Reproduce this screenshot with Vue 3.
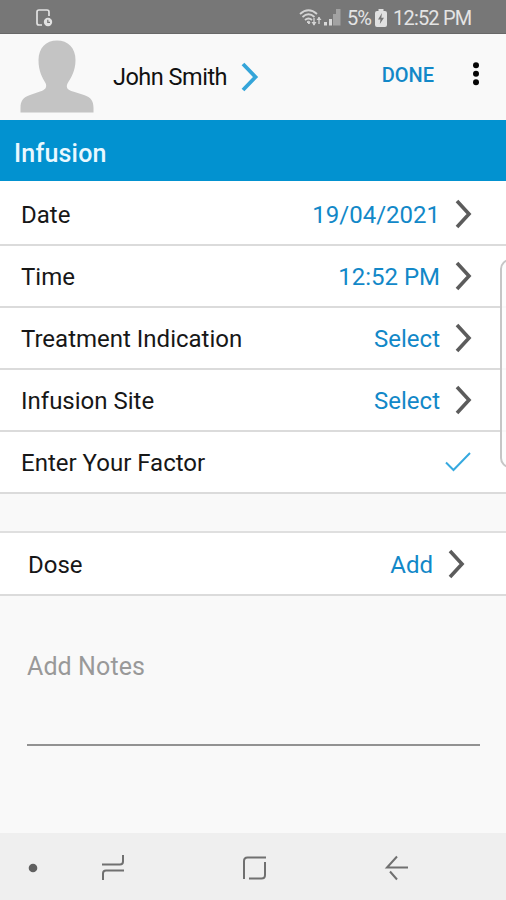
<script setup>
const rows = [
  { label: 'Date', value: '19/04/2021', cls: 'date' },
  { label: 'Time', value: '12:52 PM', cls: 'time' },
  { label: 'Treatment Indication', value: 'Select', cls: '' },
  { label: 'Infusion Site', value: 'Select', cls: '' },
  { label: 'Enter Your Factor', value: '', cls: '' }
]
</script>

<template>
  <div class="screen">
    <header class="status">
      <svg class="device" width="18" height="20" viewBox="0 0 18 20" fill="none" stroke="#e2e2e2" stroke-width="1.7">
        <path d="M14 8V4Q14 2 12 2H4Q2 2 2 4V15Q2 17 4 17H7" />
        <circle cx="13" cy="14" r="4.2" fill="#e2e2e2" stroke="none" />
        <path d="M12.8 11.8V14.3H15" stroke="#777" stroke-width="1.2" />
      </svg>
      <svg class="wifi" width="23" height="18" viewBox="0 0 23 18" fill="none" stroke="#d4d4d4" stroke-width="1.8">
        <path d="M1 5Q9.500 -2.500 18 5" />
        <path d="M3.500 8Q9.500 2.500 15.500 8" />
        <path d="M6 11Q9.500 8 13 11" />
        <path d="M8 13Q9.500 11.500 11 13L10 15Z" fill="#d4d4d4" stroke-width="1" />
        <path d="M15 9V16M20 15V8" stroke-width="1.300" />
        <path d="M12.500 13H17.500L15 16.800ZM17.500 11H22.500L20 7.700Z" fill="#d4d4d4" stroke="none" />
      </svg>
      <svg class="signal" width="17" height="17" viewBox="0 0 17 17">
        <path d="M0 13H3V16.500H0ZM5 10H8V16.500H5Z" fill="#d8d8d8" />
        <path d="M9 5H12V16.500H9ZM12 0H16.500V16.500H12Z" fill="#a2a2a2" />
      </svg>
      <span class="percent">5%</span>
      <svg class="battery" width="12" height="18" viewBox="0 0 12 18">
        <path d="M3.500 0H8.500V2H10Q12 2 12 4V16Q12 18 10 18H2Q0 18 0 16V4Q0 2 2 2H3.500Z" fill="#e0e0e0" />
        <path d="M7 4L3 10.500H5.500L4.800 15L9 8.700H6.300Z" fill="#777" />
      </svg>
      <span class="clock">12:52 PM</span>
    </header>

    <section class="profile">
      <svg class="avatar" width="74" height="73" viewBox="0 0 74 73" fill="#c4c4c4">
        <path d="M37 0.500C48 0.500 55.500 8 55.500 20C55.500 31 51 38 47.500 43.500C45.500 48 48 50 53 51.500L64 55C71 57.500 73.500 61 73.500 68V72.500H0.500V68C0.500 61 3 57.500 10 55L20 51.500C25 50 27.500 47.500 25.500 43C22 37 18.500 31 18.500 20C18.500 8 26 0.500 37 0.500Z" />
      </svg>
      <span class="name">John Smith</span>
      <svg class="name-arrow" width="18" height="30" viewBox="0 0 18 30" fill="none" stroke="#35a5d9" stroke-width="3.800">
        <path d="M2 2L14.500 15L2 28" />
      </svg>
      <span class="done">DONE</span>
      <svg class="more" width="8" height="24" viewBox="0 0 8 24" fill="#050505">
        <circle cx="4" cy="3.300" r="3" />
        <circle cx="4" cy="11.800" r="3" />
        <circle cx="4" cy="20.300" r="3" />
      </svg>
    </section>

    <h1 class="title"><span>Infusion</span></h1>

    <main class="list">
      <div v-for="row in rows" :key="row.label" class="row">
        <span class="label">{{ row.label }}</span>
        <template v-if="row.value">
          <span class="value" :class="row.cls">{{ row.value }}</span>
          <svg class="chevron" width="17" height="30" viewBox="0 0 17 30" fill="none" stroke="#5c5c5c" stroke-width="3.600">
            <path d="M2 2L14 15L2 28" />
          </svg>
        </template>
        <svg v-else class="check" width="26" height="20" viewBox="0 0 26 20" fill="none" stroke="#36a9df" stroke-width="2">
          <path d="M1 10.500L8.500 18L25 1" />
        </svg>
      </div>
    </main>

    <div class="row dose">
      <span class="label">Dose</span>
      <span class="value add">Add</span>
      <svg class="chevron" width="17" height="30" viewBox="0 0 17 30" fill="none" stroke="#5c5c5c" stroke-width="3.600">
        <path d="M2 2L14 15L2 28" />
      </svg>
    </div>

    <section class="notes"><span>Add Notes</span></section>

    <nav class="nav">
      <svg width="506" height="67" viewBox="0 0 506 67" fill="none" stroke="#707070" stroke-width="2">
        <circle cx="33" cy="35" r="4.300" fill="#606060" stroke="none" />
        <path d="M102 31.500H120Q123 31.500 123 28.500V22M124 37.500H106Q103 37.500 103 40.500V47" />
        <path d="M244 46V28Q244 24.500 247.500 24.500H266M265 29V42Q265 45.500 261.500 45.500H249" />
        <path d="M397 23.500L387 34.500H408M390 38.500L397 46.500" />
      </svg>
    </nav>

    <aside class="edge-panel"></aside>
  </div>
</template>

<style>
body {
  margin: 0;
}
</style>

<style scoped>
.screen {
  position: relative;
  width: 506px;
  height: 900px;
  overflow: hidden;
  display: flex;
  flex-direction: column;
  background: #f9f9f9;
  color: #171717;
  font-family: Roboto, sans-serif;
  font-size: 24px;
}
.screen > * {
  box-sizing: border-box;
  flex-shrink: 0;
}
.screen svg {
  display: block;
  flex-shrink: 0;
}
span {
  white-space: nowrap;
}
.status {
  height: 34px;
  display: flex;
  align-items: center;
  padding: 2px 35px 0 34px;
  background: #777;
  border-bottom: 1px solid #686868;
  color: #e4e4e4;
  font-size: 20px;
}
.device {
  margin-left: 1px;
}
.wifi {
  margin-left: auto;
}
.signal {
  margin-left: 2px;
}
.percent {
  margin-left: 6px;
  width: 23px;
  letter-spacing: -1.1px;
}
.battery {
  margin-left: 5px;
}
.clock {
  margin-left: 6px;
  width: 78px;
  letter-spacing: -0.8px;
}
.profile {
  height: 86px;
  display: flex;
  align-items: center;
  padding: 0 26px 0 20px;
}
.avatar {
  margin-top: -1px;
}
.name {
  margin-left: 19px;
  color: #111;
  font-size: 23.5px;
  letter-spacing: -0.5px;
}
.name-arrow {
  margin-left: 14px;
}
.done {
  margin-left: auto;
  margin-top: -4px;
  color: #1288c8;
  font-size: 20px;
  font-weight: 500;
}
.more {
  margin-left: 38px;
  margin-top: -6px;
}
.title {
  height: 61px;
  margin: 0;
  padding: 5px 14px 0;
  display: flex;
  align-items: center;
  background: #0292d0;
  color: #e9f8ff;
  font-size: 25px;
  font-weight: 500;
  letter-spacing: 0.2px;
}
.list {
  padding-top: 3px;
  background: #fff;
}
.row {
  box-sizing: border-box;
  height: 62px;
  display: flex;
  align-items: center;
  padding: 0 34px 0 21px;
  background: #fff;
  border-bottom: 2px solid #dbdbdb;
}
.label {
  margin-top: 2px;
}
.value {
  margin-left: auto;
  margin-top: 2px;
  color: #1288c8;
}
.chevron {
  margin-left: 15px;
}
.check {
  margin-left: auto;
  margin-right: 1px;
}
.dose {
  margin-top: 37px;
  height: 65px;
  padding: 0 41px 0 28px;
  border-top: 2px solid #dfdfdf;
}
.notes {
  width: 453px;
  height: 94px;
  margin: 56px 26px 0 27px;
  border-bottom: 2px solid #929292;
  color: #999;
  font-size: 25px;
  letter-spacing: 0.1px;
}
.nav {
  height: 67px;
  margin-top: auto;
  background: #efefef;
}
.edge-panel {
  position: absolute;
  left: 500px;
  top: 259px;
  width: 20px;
  height: 209px;
  border: 2px solid #c6c6c6;
  border-radius: 10px;
  background: rgba(253, 253, 253, 0.85);
}
</style>
